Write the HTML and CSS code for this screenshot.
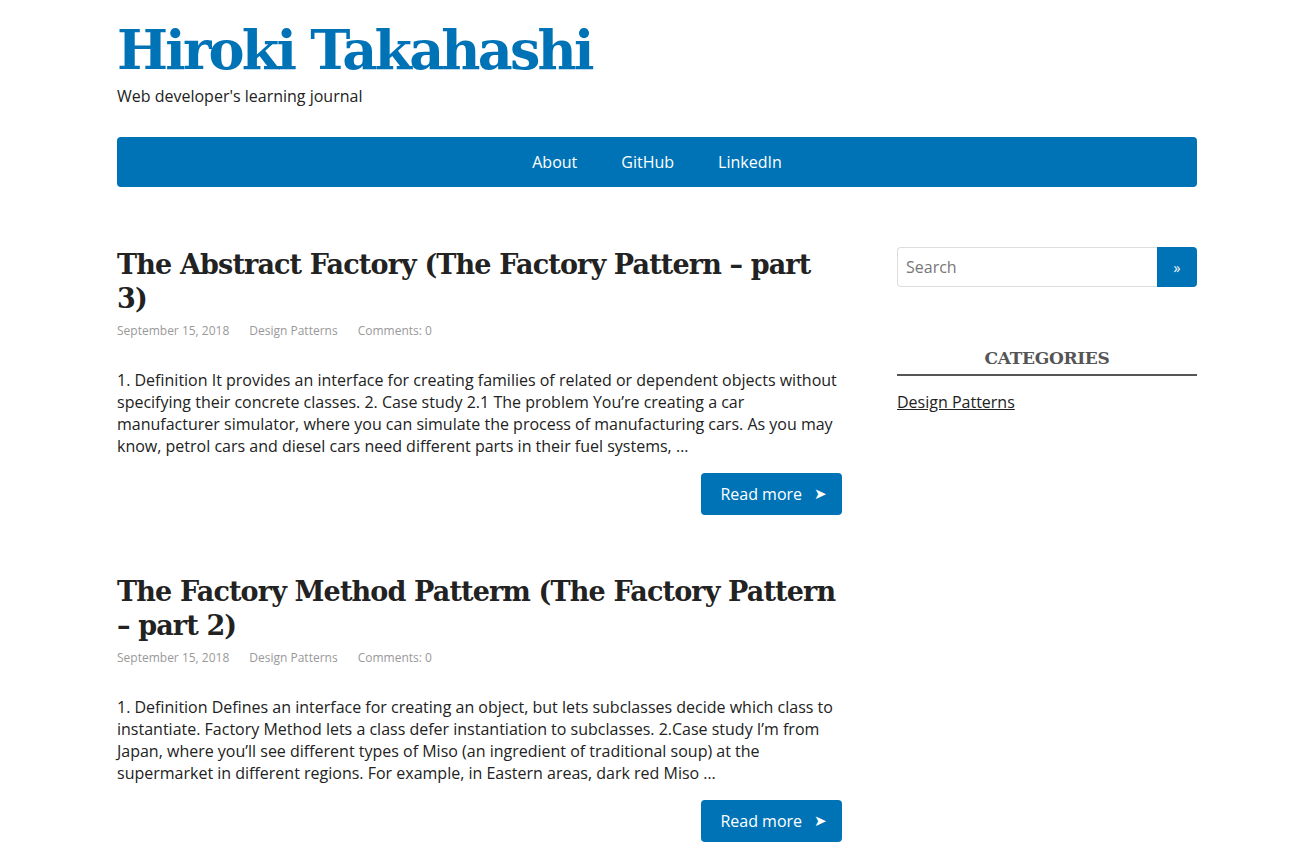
FILE: index.html
```html
<!DOCTYPE html>
<html lang="en">
<head>
<meta charset="utf-8">
<title>Hiroki Takahashi</title>
<link rel="stylesheet" href="styles.css">
</head>
<body>
<div class="wrap">
  <header class="site-header">
    <h1 class="site-title">Hiroki Takahashi</h1>
    <p class="tagline">Web developer's learning journal</p>
  </header>
  <nav class="nav">
    <a href="#">About</a>
    <a href="#">GitHub</a>
    <a href="#">LinkedIn</a>
  </nav>
  <div class="layout">
    <main class="main">
      <article class="post">
        <h2 class="post-title">The Abstract Factory (The Factory Pattern – part 3)</h2>
        <div class="meta"><span>September 15, 2018</span><span>Design Patterns</span><span>Comments: 0</span></div>
        <p class="excerpt">1. Definition It provides an interface for creating families of related or dependent objects without specifying their concrete classes. 2. Case study 2.1 The problem You’re creating a car manufacturer simulator, where you can simulate the process of manufacturing cars. As you may know, petrol cars and diesel cars need different parts in their fuel systems, …</p>
        <div class="more-row"><a class="more" href="#">Read more <span class="arrow">➤</span></a></div>
      </article>
      <article class="post">
        <h2 class="post-title">The Factory Method Patterm (The Factory Pattern – part 2)</h2>
        <div class="meta"><span>September 15, 2018</span><span>Design Patterns</span><span>Comments: 0</span></div>
        <p class="excerpt">1. Definition Defines an interface for creating an object, but lets subclasses decide which class to instantiate. Factory Method lets a class defer instantiation to subclasses. 2.Case study I’m from Japan, where you’ll see different types of Miso (an ingredient of traditional soup) at the supermarket in different regions. For example, in Eastern areas, dark red Miso …</p>
        <div class="more-row"><a class="more" href="#">Read more <span class="arrow">➤</span></a></div>
      </article>
    </main>
    <aside class="sidebar">
      <form class="search">
        <input class="search-input" type="text" placeholder="Search">
        <button class="search-btn" type="button">»</button>
      </form>
      <section class="widget">
        <h3 class="widget-title">CATEGORIES</h3>
        <a class="cat-link" href="#">Design Patterns</a>
      </section>
    </aside>
  </div>
</div>
</body>
</html>
```
FILE: styles.css
```css
* { box-sizing: border-box; }
html, body { margin: 0; padding: 0; background: #fff; }
body {
  font-family: "Open Sans", "Noto Sans", sans-serif;
  font-size: 16px;
  line-height: 22px;
  color: #222;
}
.wrap {
  width: 1080px;
  margin: 0 0 0 117px;
}
.site-header { padding-top: 18px; }
.site-title {
  margin: 0;
  font-family: "DejaVu Serif", serif;
  font-weight: bold;
  font-size: 54px;
  line-height: 64px;
  color: #0073b7;
  letter-spacing: -2.8px;
}
.tagline {
  margin: 3px 0 0;
  font-size: 16px;
  line-height: 22px;
  color: #222;
}
.nav {
  margin-top: 30px;
  height: 50px;
  background: #0073b7;
  border-radius: 4px;
  display: flex;
  justify-content: center;
  align-items: center;
  gap: 44px;
}
.nav a {
  color: #fff;
  text-decoration: none;
  font-size: 16px;
}
.layout {
  display: flex;
  gap: 55px;
  margin-top: 61px;
}
.main { width: 725px; }
.sidebar { width: 300px; margin-top: -1px; }
.post { margin-bottom: 60px; }
.post-title {
  margin: 0;
  font-family: "DejaVu Serif", serif;
  font-weight: bold;
  font-size: 27px;
  line-height: 34px;
  color: #222;
  letter-spacing: -0.85px;
}
.meta {
  margin-top: 6px;
  font-size: 12px;
  line-height: 18px;
  color: #999;
  display: flex;
  gap: 20px;
}
.excerpt {
  margin: 29px 0 0;
  font-size: 16px;
  line-height: 22px;
  color: #222;
}
.more-row {
  display: flex;
  justify-content: flex-end;
  margin-top: 16px;
}
.more {
  display: flex;
  align-items: center;
  justify-content: center;
  gap: 12px;
  width: 141px;
  height: 42px;
  padding-left: 4px;
  background: #0073b7;
  color: #fff;
  border-radius: 4px;
  text-decoration: none;
  font-size: 16px;
}
.arrow { font-size: 15px; font-family: "DejaVu Sans", sans-serif; }
.search {
  display: flex;
  height: 40px;
  margin: 0;
}
.search-input {
  flex: 1;
  height: 40px;
  border: 1px solid #ddd;
  border-right: none;
  border-radius: 4px 0 0 4px;
  padding: 0 8px;
  font-family: "Open Sans", sans-serif;
  font-size: 16px;
  color: #222;
  outline: none;
}
.search-input::placeholder { color: #777; }
.search-btn {
  width: 40px;
  height: 40px;
  border: none;
  background: #0073b7;
  color: #fff;
  border-radius: 0 4px 4px 0;
  font-family: "Open Sans", sans-serif;
  font-size: 14px;
  padding: 0;
}
.widget { margin-top: 58px; }
.widget-title {
  margin: 0;
  text-align: center;
  font-family: "DejaVu Serif", serif;
  font-weight: bold;
  font-size: 17px;
  line-height: 27px;
  color: #555;
  letter-spacing: -0.3px;
  padding-bottom: 2px;
  border-bottom: 2px solid #555;
}
.cat-link {
  display: inline-block;
  margin-top: 15px;
  color: #222;
  text-decoration: underline;
  font-size: 16px;
}
```
